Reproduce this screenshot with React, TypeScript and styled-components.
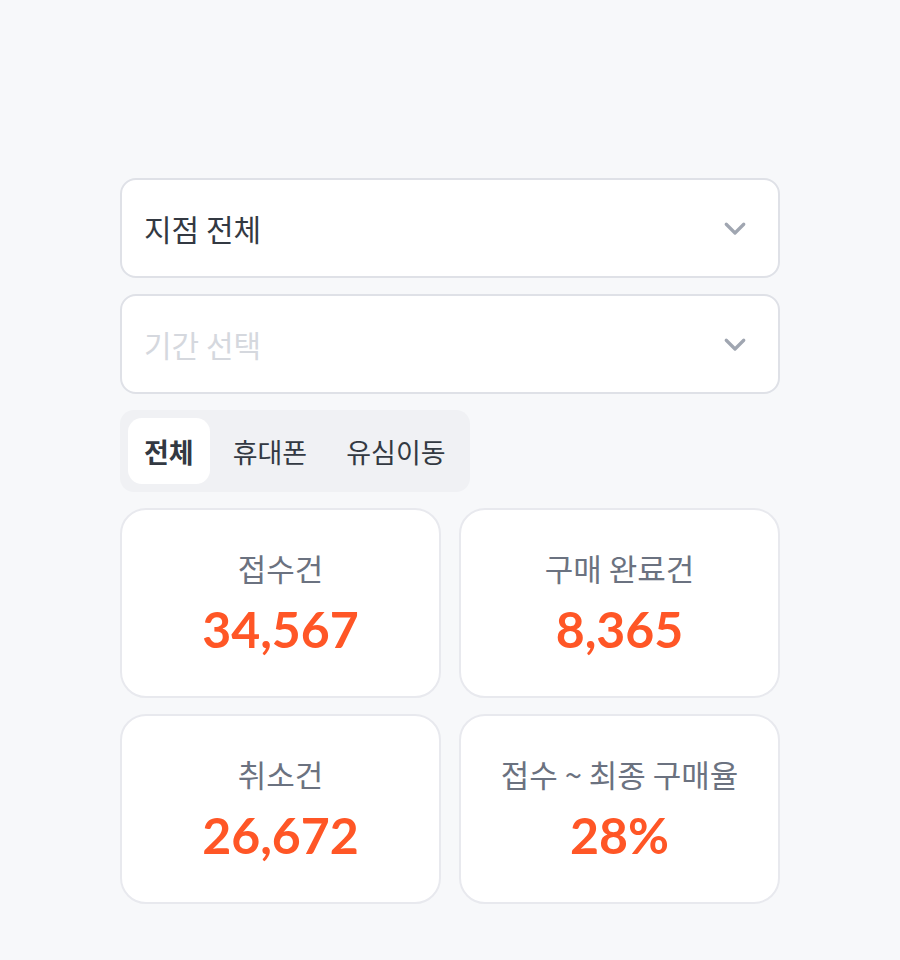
import React, { useState } from 'react';
import styled, { createGlobalStyle } from 'styled-components';

const GlobalStyle = createGlobalStyle`
  html, body {
    margin: 0;
    padding: 0;
    background: #f7f8fa;
    font-family: "Noto Sans CJK KR", "Noto Sans", sans-serif;
  }
`;

const Page = styled.div`
  min-height: 960px;
  display: flex;
  justify-content: center;
  padding-top: 178px;
  box-sizing: border-box;
`;

const Column = styled.div`
  width: 660px;
  display: flex;
  flex-direction: column;
`;

const Select = styled.button<{ $placeholder?: boolean }>`
  height: 100px;
  width: 100%;
  box-sizing: border-box;
  border: 2px solid #dfe1e7;
  border-radius: 16px;
  background: #fff;
  display: flex;
  align-items: center;
  justify-content: space-between;
  padding: 0 28px 0 22px;
  margin-bottom: 16px;
  font-family: inherit;
  font-size: 30px;
  color: ${(p) => (p.$placeholder ? '#d5d8de' : '#333942')};
  cursor: pointer;
`;

const Tabs = styled.div`
  align-self: flex-start;
  display: flex;
  gap: 7px;
  padding: 8px;
  background: #f0f1f4;
  border-radius: 14px;
  margin-bottom: 16px;
`;

const Tab = styled.button<{ $active?: boolean }>`
  height: 66px;
  padding: 0 16px;
  border: none;
  border-radius: 14px;
  background: ${(p) => (p.$active ? '#fff' : 'transparent')};
  font-family: inherit;
  font-size: 27px;
  font-weight: ${(p) => (p.$active ? 700 : 400)};
  color: #333942;
  cursor: pointer;
`;

const Grid = styled.div`
  display: grid;
  grid-template-columns: 1fr 1fr;
  gap: 16px 18px;
`;

const Card = styled.div`
  height: 190px;
  box-sizing: border-box;
  border: 2px solid #e8e9ee;
  border-radius: 26px;
  background: #fff;
  display: flex;
  flex-direction: column;
  align-items: center;
  justify-content: center;
  gap: 10px;
`;

const Label = styled.div`
  font-size: 31px;
  color: #6b7280;
  line-height: 1.35;
`;

const Value = styled.div`
  font-family: "Lato", "Noto Sans", sans-serif;
  font-size: 50px;
  font-weight: 700;
  color: #ff5626;
  line-height: 1.2;
`;

const Chevron = () => (
  <svg width="30" height="30" viewBox="0 0 24 24" fill="none" stroke="#a0a6b1" strokeWidth="2.6" strokeLinecap="round" strokeLinejoin="round">
    <path d="M5 9l7 7 7-7" />
  </svg>
);

const STATS = [
  { label: '접수건', value: '34,567' },
  { label: '구매 완료건', value: '8,365' },
  { label: '취소건', value: '26,672' },
  { label: '접수 ~ 최종 구매율', value: '28%' },
];

const TABS = ['전체', '휴대폰', '유심이동'];

export default function App() {
  const [tab, setTab] = useState('전체');
  return (
    <>
      <GlobalStyle />
      <Page>
        <Column>
          <Select>
            지점 전체
            <Chevron />
          </Select>
          <Select $placeholder>
            기간 선택
            <Chevron />
          </Select>
          <Tabs>
            {TABS.map((t) => (
              <Tab key={t} $active={t === tab} onClick={() => setTab(t)}>
                {t}
              </Tab>
            ))}
          </Tabs>
          <Grid>
            {STATS.map((s) => (
              <Card key={s.label}>
                <Label>{s.label}</Label>
                <Value>{s.value}</Value>
              </Card>
            ))}
          </Grid>
        </Column>
      </Page>
    </>
  );
}
